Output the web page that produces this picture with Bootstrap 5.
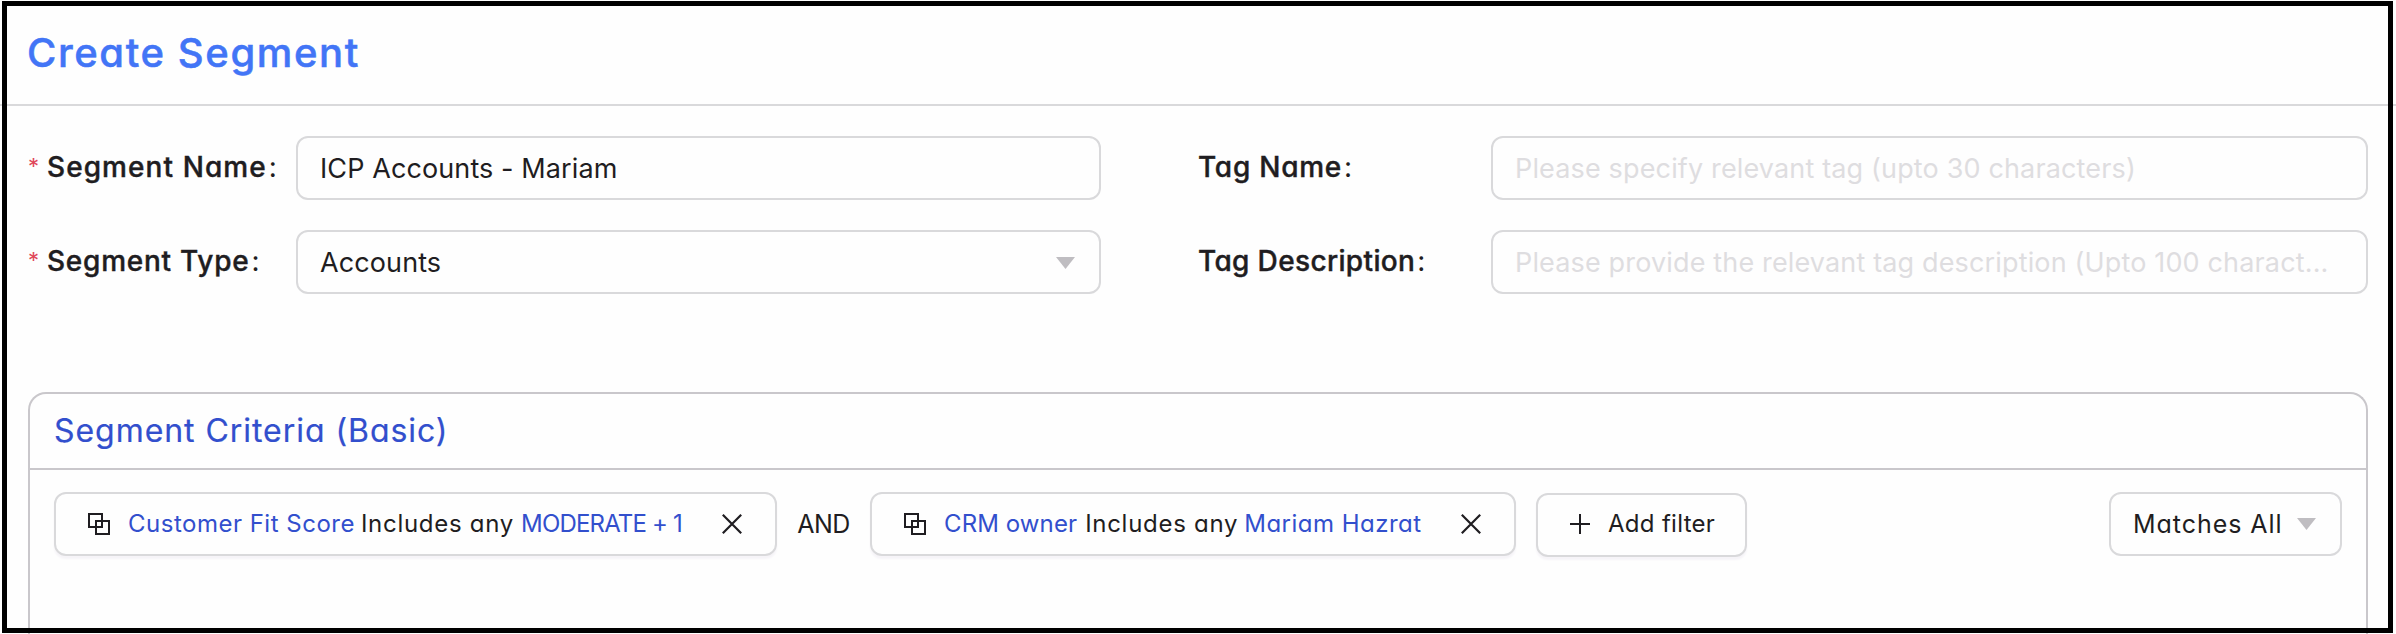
<!DOCTYPE html>
<html lang="en">
<head>
<meta charset="utf-8">
<meta name="viewport" content="width=device-width, initial-scale=1">
<title>Create Segment</title>
<link href="https://cdn.jsdelivr.net/npm/bootstrap@5.3.0/dist/css/bootstrap.min.css" rel="stylesheet">
<style>
body{font-family:Inter,"Liberation Sans",sans-serif;font-feature-settings:"cv11";background:#fefefe;color:#1f1d21;height:634px;overflow:hidden;white-space:nowrap}
.frame{inset:1px 3px 1px 2px;border:5px solid #000;pointer-events:none;z-index:5}
.page-head{height:106px;border-bottom:2px solid #d9d9db;padding:0 27px}
.page-title{font-size:40px;font-weight:500;-webkit-text-stroke:.5px;letter-spacing:1.6px;line-height:46px;color:#4275f6;padding-top:30px}
.form-area{padding:30px 28px 0}
.form-line{height:64px;margin-bottom:30px}
.field-label{font-size:28px;line-height:36px;font-weight:500;-webkit-text-stroke:.4px;padding-bottom:2px}
.lbl-left{width:268px;letter-spacing:1.08px}
.lbl-right{width:293px;margin-left:97px;letter-spacing:.75px}
.lbl-type{letter-spacing:.75px}
.lbl-desc{letter-spacing:.35px}
.star{color:#e0475a;font-size:22px;width:19px;line-height:34px;letter-spacing:0;font-weight:400;-webkit-text-stroke:0}
.colon{font-weight:400;margin-left:2px;letter-spacing:0;-webkit-text-stroke:0}
.field{height:64px;border:2px solid #d9d9db;border-radius:12px;background:#fefefe;padding:1px 24px 0 22px;font-size:27px;line-height:34px;letter-spacing:.1px;font-feature-settings:normal}
.field-left{width:805px}
.field-right{width:877px}
.ghost{color:#dedde0;letter-spacing:.15px}
.caret{width:19px;height:12px;fill:#bfbdc1;flex:none}
.criteria{margin:98px 28px 0;height:242px;border:2px solid #c9c7cb;border-bottom:0;border-radius:18px 18px 0 0;--bs-card-bg:#fefefe}
.criteria-head{height:76px;border-bottom:2px solid #c9c7cb;padding:15px 24px 0;font-size:32px;line-height:44px;letter-spacing:.95px;-webkit-text-stroke:.2px;color:#324fcd}
.criteria-body{padding:22px 24px 0}
.chip{height:64px;border:2px solid #d9d9db;border-radius:12px;background:#fefefe;font-size:24px;line-height:32px}
.chip-filter{padding:0 33px 0 32px;box-shadow:0 3px 2px #f6f4f8}
.chip-score{width:723px}
.chip-owner{width:646px}
.key{color:#324fcd}
.key-score{margin:0 6px 0 18px;letter-spacing:.5px}
.key-owner{margin:0 8px 0 18px;letter-spacing:.1px}
.val-score{margin-left:7px;letter-spacing:-.82px}
.val-owner{margin-left:6px;letter-spacing:.48px}
.operator{letter-spacing:.72px}
.glyph{fill:none;stroke:#1f1d21;flex:none}
.joiner{font-size:25px;width:93px;line-height:64px;letter-spacing:-.5px}
.add-btn{width:211px;margin:1px 0 0 20px;padding:0 0 2px 32px;gap:18px;letter-spacing:.3px;box-shadow:0 3px 2px #f6f4f8}
.match-select{width:233px;font-size:25px;padding:0 24px 0 22px;letter-spacing:.95px}
</style>
</head>
<body>
<div class="frame position-fixed"></div>
<header class="page-head"><h1 class="page-title m-0">Create Segment</h1></header>
<main>
<form class="form-area">
  <div class="form-line d-flex align-items-center">
    <label class="field-label lbl-left d-flex"><span class="star">*</span><span>Segment Name</span><span class="colon">:</span></label>
    <div class="field field-left d-flex align-items-center">ICP Accounts - Mariam</div>
    <label class="field-label lbl-right d-flex"><span>Tag Name</span><span class="colon">:</span></label>
    <div class="field field-right d-flex align-items-center ghost">Please specify relevant tag (upto 30 characters)</div>
  </div>
  <div class="form-line d-flex align-items-center">
    <label class="field-label lbl-left d-flex"><span class="star">*</span><span class="lbl-type">Segment Type</span><span class="colon">:</span></label>
    <div class="field field-left d-flex align-items-center justify-content-between"><span>Accounts</span><svg class="caret" viewBox="0 0 19 12"><path d="M0 0h19L9.5 12z"/></svg></div>
    <label class="field-label lbl-right d-flex"><span class="lbl-desc">Tag Description</span><span class="colon">:</span></label>
    <div class="field field-right d-flex align-items-center ghost">Please provide the relevant tag description (Upto 100 charact...</div>
  </div>
</form>
<section class="card criteria">
  <div class="criteria-head">Segment Criteria (Basic)</div>
  <div class="criteria-body d-flex align-items-start">
    <div class="chip chip-filter chip-score d-flex align-items-center">
      <svg class="glyph" width="22" height="22" viewBox="0 0 22 22" stroke-width="2"><path d="M1 1h13v13H1zM8 8h13v13H8z"/></svg>
      <span class="key key-score">Customer Fit Score</span><span class="operator">Includes any</span><span class="key val-score">MODERATE + 1</span>
      <svg class="glyph ms-auto" width="20" height="20" viewBox="0 0 20 20" stroke-width="2.2"><path d="M.8.8l18.4 18.4M19.2.8L.8 19.2"/></svg>
    </div>
    <div class="joiner text-center">AND</div>
    <div class="chip chip-filter chip-owner d-flex align-items-center">
      <svg class="glyph" width="22" height="22" viewBox="0 0 22 22" stroke-width="2"><path d="M1 1h13v13H1zM8 8h13v13H8z"/></svg>
      <span class="key key-owner">CRM owner</span><span class="operator">Includes any</span><span class="key val-owner">Mariam Hazrat</span>
      <svg class="glyph ms-auto" width="20" height="20" viewBox="0 0 20 20" stroke-width="2.2"><path d="M.8.8l18.4 18.4M19.2.8L.8 19.2"/></svg>
    </div>
    <div class="chip add-btn d-flex align-items-center" role="button">
      <svg class="glyph" width="20" height="20" viewBox="0 0 20 20" stroke-width="2"><path d="M10 0v20M0 10h20"/></svg>
      <span>Add filter</span>
    </div>
    <div class="chip match-select d-flex align-items-center justify-content-between ms-auto">
      <span>Matches All</span><svg class="caret" viewBox="0 0 19 12"><path d="M0 0h19L9.5 12z"/></svg>
    </div>
  </div>
</section>
</main>
<script src="https://cdn.jsdelivr.net/npm/bootstrap@5.3.0/dist/js/bootstrap.bundle.min.js"></script>
</body>
</html>
